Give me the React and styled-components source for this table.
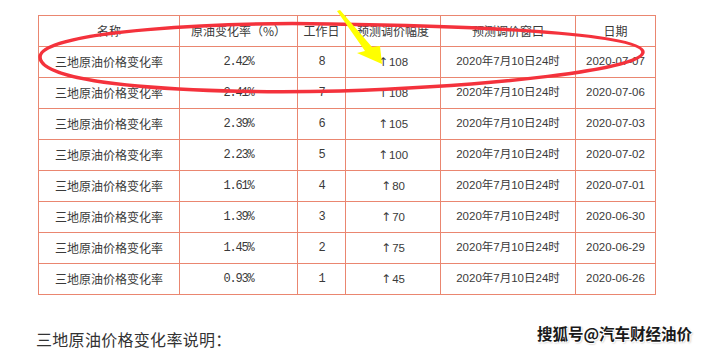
import React from 'react'
import styled, { createGlobalStyle } from 'styled-components'

const rows = [
  { rate: '2.42%', day: 8, amp: 108, date: '2020-07-07' },
  { rate: '2.41%', day: 7, amp: 108, date: '2020-07-06' },
  { rate: '2.39%', day: 6, amp: 105, date: '2020-07-03' },
  { rate: '2.23%', day: 5, amp: 100, date: '2020-07-02' },
  { rate: '1.61%', day: 4, amp: 80, date: '2020-07-01' },
  { rate: '1.39%', day: 3, amp: 70, date: '2020-06-30' },
  { rate: '1.45%', day: 2, amp: 75, date: '2020-06-29' },
  { rate: '0.93%', day: 1, amp: 45, date: '2020-06-26' },
]

const widths = [141, 118, 48, 95, 135, 80]

function App() {
  return (
    <Page>
      <GlobalStyle />
      <Table>
        <colgroup>
          {widths.map((w, i) => <col key={i} style={{ width: w }} />)}
        </colgroup>
        <thead>
          <tr>
            <Cell as="th">名称</Cell>
            <Cell as="th">原油变化率（%）</Cell>
            <Cell as="th">工作日</Cell>
            <Cell as="th">预测调价幅度</Cell>
            <Cell as="th">预测调价窗口</Cell>
            <Cell as="th">日期</Cell>
          </tr>
        </thead>
        <tbody>
          {rows.map((r, i) => (
            <tr key={i}>
              <Cell>三地原油价格变化率</Cell>
              <Cell $kind="mono">{r.rate}</Cell>
              <Cell $kind="mono">{r.day}</Cell>
              <Cell $kind="sans"><Arrow>↑</Arrow>{r.amp}</Cell>
              <Cell $kind="sans">2020年7月10日24时</Cell>
              <Cell $kind="sans">{r.date}</Cell>
            </tr>
          ))}
        </tbody>
      </Table>

      <Note>三地原油价格变化率说明：</Note>

      <Marks viewBox="0 0 706 354">
        <path
          d="M 40 57 C 40 30, 230 22, 330 24 C 460 26, 643 32, 643 52 C 643 70, 490 86, 340 91 C 200 94, 40 86, 40 57 Z"
          fill="none"
          stroke="#f4323c"
          strokeWidth="3.5"
        />
        <polygon points="337,11 340,10 372,47 380,46 382,64 357,53 365,51" fill="#ffff00" />
      </Marks>

      <Watermark>搜狐号@汽车财经油价</Watermark>
    </Page>
  )
}

export default App

const GlobalStyle = createGlobalStyle`
  body {
    margin: 0;
    background: #fff;
  }
`

const Page = styled.div`
  position: relative;
  width: 706px;
  height: 354px;
  overflow: hidden;
  padding: 15px 0 0 38px;
  box-sizing: border-box;
  font-family: "Noto Sans CJK SC", sans-serif;
  color: #3a3a3a;
`

const Table = styled.table`
  border-collapse: collapse;
  table-layout: fixed;
  width: 618px;
  border: 1px solid #ea8670;
`

const Cell = styled.td`
  height: 30px;
  padding: 0;
  border: 1px solid #ea8670;
  text-align: center;
  vertical-align: middle;
  font-weight: normal;
  white-space: nowrap;
  font-size: ${p => (p.$kind === 'mono' ? '12px' : p.$kind === 'sans' ? '11.5px' : '12px')};
  font-family: ${p =>
    p.$kind === 'mono'
      ? '"Liberation Mono", "Noto Sans CJK SC", monospace'
      : p.$kind === 'sans'
        ? '"Liberation Sans", "Noto Sans CJK SC", sans-serif'
        : '"Noto Sans CJK SC", sans-serif'};
  letter-spacing: ${p => (p.$kind === 'mono' ? '-1.2px' : '0')};
  line-height: 1;
`

const Arrow = styled.span`
  font-family: "DejaVu Sans", sans-serif;
  font-size: 12px;
  margin-right: 1px;
`

const Note = styled.div`
  margin-top: 33px;
  margin-left: -2px;
  font-size: 16px;
  line-height: 22px;
  letter-spacing: 0.3px;
  color: #333;
`

const Marks = styled.svg`
  position: absolute;
  left: 0;
  top: 0;
  width: 706px;
  height: 354px;
  pointer-events: none;
`

const Watermark = styled.div`
  position: absolute;
  left: 537px;
  top: 323px;
  font-family: "Noto Sans CJK SC", sans-serif;
  font-weight: bold;
  font-size: 15.5px;
  line-height: 20px;
  color: #1a1a1a;
  text-shadow: 1px 1px 0 #fff, -1px -1px 0 #fff, 1px -1px 0 #fff, -1px 1px 0 #fff, 1px 1px 2px #999;
`
